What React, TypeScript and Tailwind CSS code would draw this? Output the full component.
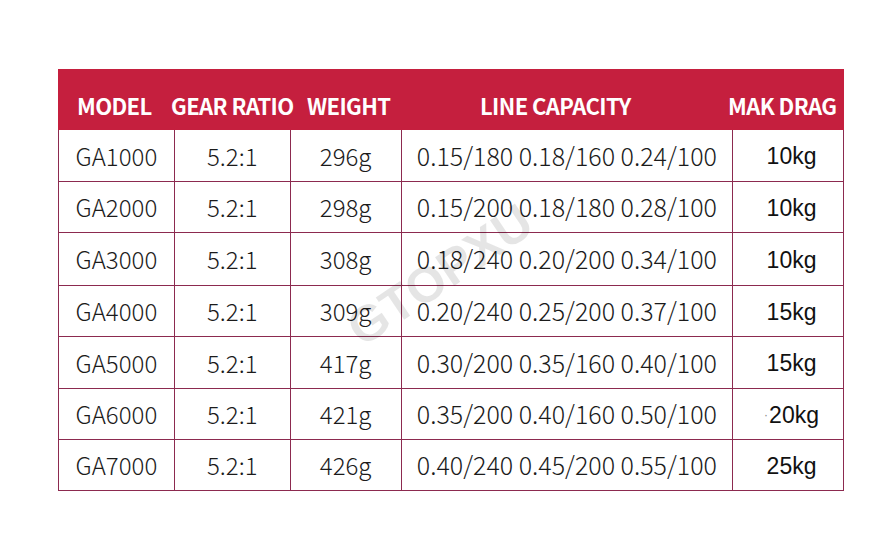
const rows = [
  { model: 'GA1000', ratio: '5.2:1', weight: '296g', line: '0.15/180 0.18/160 0.24/100', drag: '10kg', h: 'h-[52px]' },
  { model: 'GA2000', ratio: '5.2:1', weight: '298g', line: '0.15/200 0.18/180 0.28/100', drag: '10kg', h: 'h-[51px]' },
  { model: 'GA3000', ratio: '5.2:1', weight: '308g', line: '0.18/240 0.20/200 0.34/100', drag: '10kg', h: 'h-[53px]' },
  { model: 'GA4000', ratio: '5.2:1', weight: '309g', line: '0.20/240 0.25/200 0.37/100', drag: '15kg', h: 'h-[51px]' },
  { model: 'GA5000', ratio: '5.2:1', weight: '417g', line: '0.30/200 0.35/160 0.40/100', drag: '15kg', h: 'h-[52px]' },
  { model: 'GA6000', ratio: '5.2:1', weight: '421g', line: '0.35/200 0.40/160 0.50/100', drag: '20kg', h: 'h-[51px]', dot: true },
  { model: 'GA7000', ratio: '5.2:1', weight: '426g', line: '0.40/240 0.45/200 0.55/100', drag: '25kg', h: 'h-[51px]' }
]

const cell = 'flex items-center justify-center border-r border-[#8c2a4f]'
const cjk = { fontFamily: '"Noto Sans CJK SC", "Noto Sans", sans-serif' }

export default function App() {
  return (
    <div className="h-[538px] w-[888px] bg-white pt-[69px] pl-[58px]">
      <div className="relative w-[786px]">
        {/* header */}
        <div
          className="flex h-[61px] items-end bg-[#c51f3e] pb-[14px] pl-[19px] text-[22px] font-bold leading-none tracking-[-0.6px] whitespace-nowrap text-white"
          style={cjk}
        >
          <span className="w-[94px]">MODEL</span>
          <span className="w-[136px]">GEAR RATIO</span>
          <span className="w-[173px]">WEIGHT</span>
          <span className="w-[248px]">LINE CAPACITY</span>
          <span>MAK DRAG</span>
        </div>

        {/* body */}
        <div className="border-l border-[#8c2a4f]">
          {rows.map((r) => (
            <div key={r.model} className={`flex ${r.h} border-b border-[#8c2a4f]`}>
              <div className={`${cell} w-[116px] text-[24px] font-light text-[#1b1b1b]`} style={cjk}>
                {r.model}
              </div>
              <div className={`${cell} w-[116px] text-[24px] font-light text-[#1b1b1b]`} style={cjk}>
                {r.ratio}
              </div>
              <div className={`${cell} w-[111px] text-[24px] font-light text-[#1b1b1b]`} style={cjk}>
                {r.weight}
              </div>
              <div className={`${cell} w-[332px] text-[25px] font-light text-[#1b1b1b]`} style={cjk}>
                {r.line}
              </div>
              <div
                className={`${cell} w-[111px] pl-[7px] pt-[2px] text-[23px] text-[#111]`}
                style={{ fontFamily: '"Liberation Sans", Arial, sans-serif' }}
              >
                {r.dot && <span className="mr-[1px] text-[12px] text-[#888]">·</span>}
                {r.drag}
              </div>
            </div>
          ))}
        </div>

        {/* watermark */}
        <div
          className="pointer-events-none absolute top-[206px] left-[382px] -translate-x-1/2 -translate-y-1/2 -rotate-[34deg] text-[50px] leading-none font-black text-black/[0.1] select-none"
          style={{ fontFamily: '"Liberation Sans Narrow", "Liberation Sans", Arial, sans-serif' }}
        >
          GTOPXU
        </div>
      </div>
    </div>
  )
}
